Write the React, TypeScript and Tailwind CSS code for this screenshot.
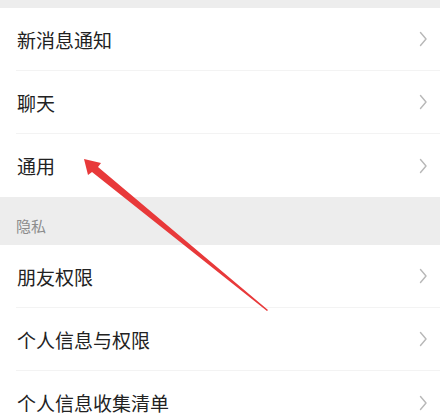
import React from "react";

const font = { fontFamily: '"Noto Sans CJK SC", "Noto Sans", sans-serif' };

function Chevron() {
  return (
    <svg width="10" height="16" viewBox="0 0 10 16" className="shrink-0">
      <path d="M2.5 1.5 L8 8 L2.5 14.5" fill="none" stroke="#b8b8b8" strokeWidth="1.4" strokeLinecap="round" strokeLinejoin="round" />
    </svg>
  );
}

function Row({ label, last }: { label: string; last?: boolean }) {
  return (
    <div className="flex flex-col h-[63px] bg-white">
      <div className="flex-1 flex items-center justify-between pl-[17px] pr-[12px]">
        <span className="text-[19px] text-[#222222] leading-none">{label}</span>
        <Chevron />
      </div>
      {!last && <div className="h-px ml-[16px] bg-[#f3f3f3]" />}
    </div>
  );
}

export default function App() {
  return (
    <div className="relative w-[440px] h-[418px] overflow-hidden bg-white" style={font}>
      <div className="h-[8px] bg-[#ededed]" />
      <Row label="新消息通知" />
      <Row label="聊天" />
      <Row label="通用" last />
      <div className="h-[48px] bg-[#ededed] pl-[16px] pt-[16px]">
        <span className="text-[15px] text-[#8c8c8c] leading-none">隐私</span>
      </div>
      <Row label="朋友权限" />
      <Row label="个人信息与权限" />
      <Row label="个人信息收集清单" last />
      <svg className="absolute inset-0 pointer-events-none" width="440" height="418" viewBox="0 0 440 418">
        <polygon points="84,159 101,163 98,167 268,310 267,311 92,172 88,175" fill="#e8393a" />
      </svg>
    </div>
  );
}
